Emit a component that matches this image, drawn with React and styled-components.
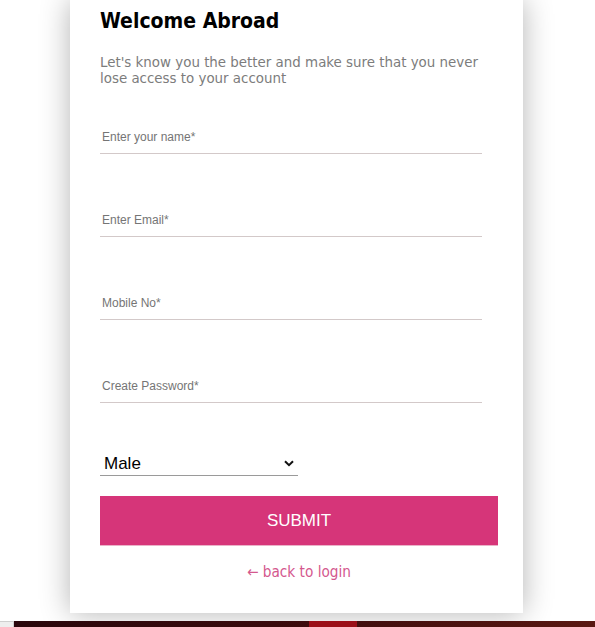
import React from "react";
import styled, { createGlobalStyle } from "styled-components";

const Global = createGlobalStyle`
  html, body { margin: 0; padding: 0; background: #ffffff; }
  body { font-family: "DejaVu Sans", sans-serif; overflow: hidden; }
`;

const Page = styled.div`
  width: 595px;
  height: 627px;
  display: flex;
  flex-direction: column;
  overflow: hidden;
`;

const Main = styled.main`
  flex: 1;
  display: flex;
  padding-left: 70px;
`;

const Card = styled.section`
  width: 453px;
  height: 613px;
  background: #fff;
  box-shadow: 0 0 28px rgba(0, 0, 0, 0.3);
  box-sizing: border-box;
  padding: 8px 30px 0 30px;
  display: flex;
  flex-direction: column;
`;

const Title = styled.h1`
  margin: 0;
  font-family: "DejaVu Sans Condensed", "DejaVu Sans", sans-serif;
  font-size: 21px;
  font-weight: 600;
  color: #000;
  line-height: 26px;
`;

const Subtitle = styled.p`
  margin: 20px 0 0 0;
  font-family: "DejaVu Sans Condensed", "DejaVu Sans", sans-serif;
  font-size: 14.9px;
  line-height: 16px;
  color: #7c7c7c;
  width: 390px;
`;

const Fields = styled.div`
  display: flex;
  flex-direction: column;
  gap: 48px;
  margin-top: 33px;
`;

const Input = styled.input`
  width: 382px;
  height: 35px;
  box-sizing: border-box;
  border: none;
  border-bottom: 1px solid #d3c9c9;
  padding: 2px 2px 0 2px;
  font-family: "Liberation Sans", Arial, sans-serif;
  font-size: 12px;
  color: #333;
  outline: none;
  background: transparent;
  &::placeholder { color: #757575; }
`;

const SelectWrap = styled.div`
  position: relative;
  width: 198px;
  margin-top: 49px;
`;

const Select = styled.select`
  appearance: none;
  width: 198px;
  height: 24px;
  box-sizing: border-box;
  border: none;
  border-bottom: 1px solid #9a9a9a;
  background: transparent;
  padding: 0 0 0 4px;
  font-family: "Liberation Sans", Arial, sans-serif;
  font-size: 17px;
  color: #000;
  outline: none;
`;

const Chevron = styled.svg`
  position: absolute;
  right: 4px;
  top: 8px;
  pointer-events: none;
`;

const Submit = styled.button`
  margin-top: 20px;
  width: 398px;
  height: 50px;
  border: none;
  border-bottom: 1px solid #eab2c8;
  background: #d63579;
  color: #fff;
  font-family: "Liberation Sans", Arial, sans-serif;
  font-size: 17px;
  cursor: pointer;
`;

const Back = styled.a`
  margin-top: 17px;
  width: 398px;
  text-align: center;
  font-family: "DejaVu Sans Condensed", "DejaVu Sans", sans-serif;
  font-size: 15.2px;
  color: #d4588e;
  text-decoration: none;
`;

const Footer = styled.footer`
  margin-top: 8px;
  height: 6px;
  display: flex;
`;

const FooterLeft = styled.div`
  width: 13px;
  background: #eeeeee;
  border-top: 1px solid #cfcfcf;
  border-right: 1px solid #cfcfcf;
`;

const FooterBar = styled.div`
  flex: 1;
  display: flex;
  background: linear-gradient(90deg, #2a070c 0%, #3a0a0c 45%, #5a1812 100%);
`;

const FooterSpacer = styled.div`
  width: ${(p) => p.$w}px;
`;

const FooterRed = styled.div`
  width: 48px;
  background: #9a0f18;
`;

export default function App() {
  return (
    <Page>
      <Global />
      <Main>
        <Card>
          <Title>Welcome Abroad</Title>
          <Subtitle>
            Let's know you the better and make sure that you never lose access to your account
          </Subtitle>
          <Fields>
            <Input placeholder="Enter your name*" />
            <Input placeholder="Enter Email*" />
            <Input placeholder="Mobile No*" />
            <Input placeholder="Create Password*" type="password" />
          </Fields>
          <SelectWrap>
            <Select defaultValue="Male">
              <option>Male</option>
              <option>Female</option>
            </Select>
            <Chevron width="10" height="7" viewBox="0 0 10 7">
              <path d="M1 1.2 L5 5.2 L9 1.2" fill="none" stroke="#111" strokeWidth="2" />
            </Chevron>
          </SelectWrap>
          <Submit>SUBMIT</Submit>
          <Back href="#">← back to login</Back>
        </Card>
      </Main>
      <Footer>
        <FooterLeft />
        <FooterBar>
          <FooterSpacer $w={295} />
          <FooterRed />
        </FooterBar>
      </Footer>
    </Page>
  );
}
